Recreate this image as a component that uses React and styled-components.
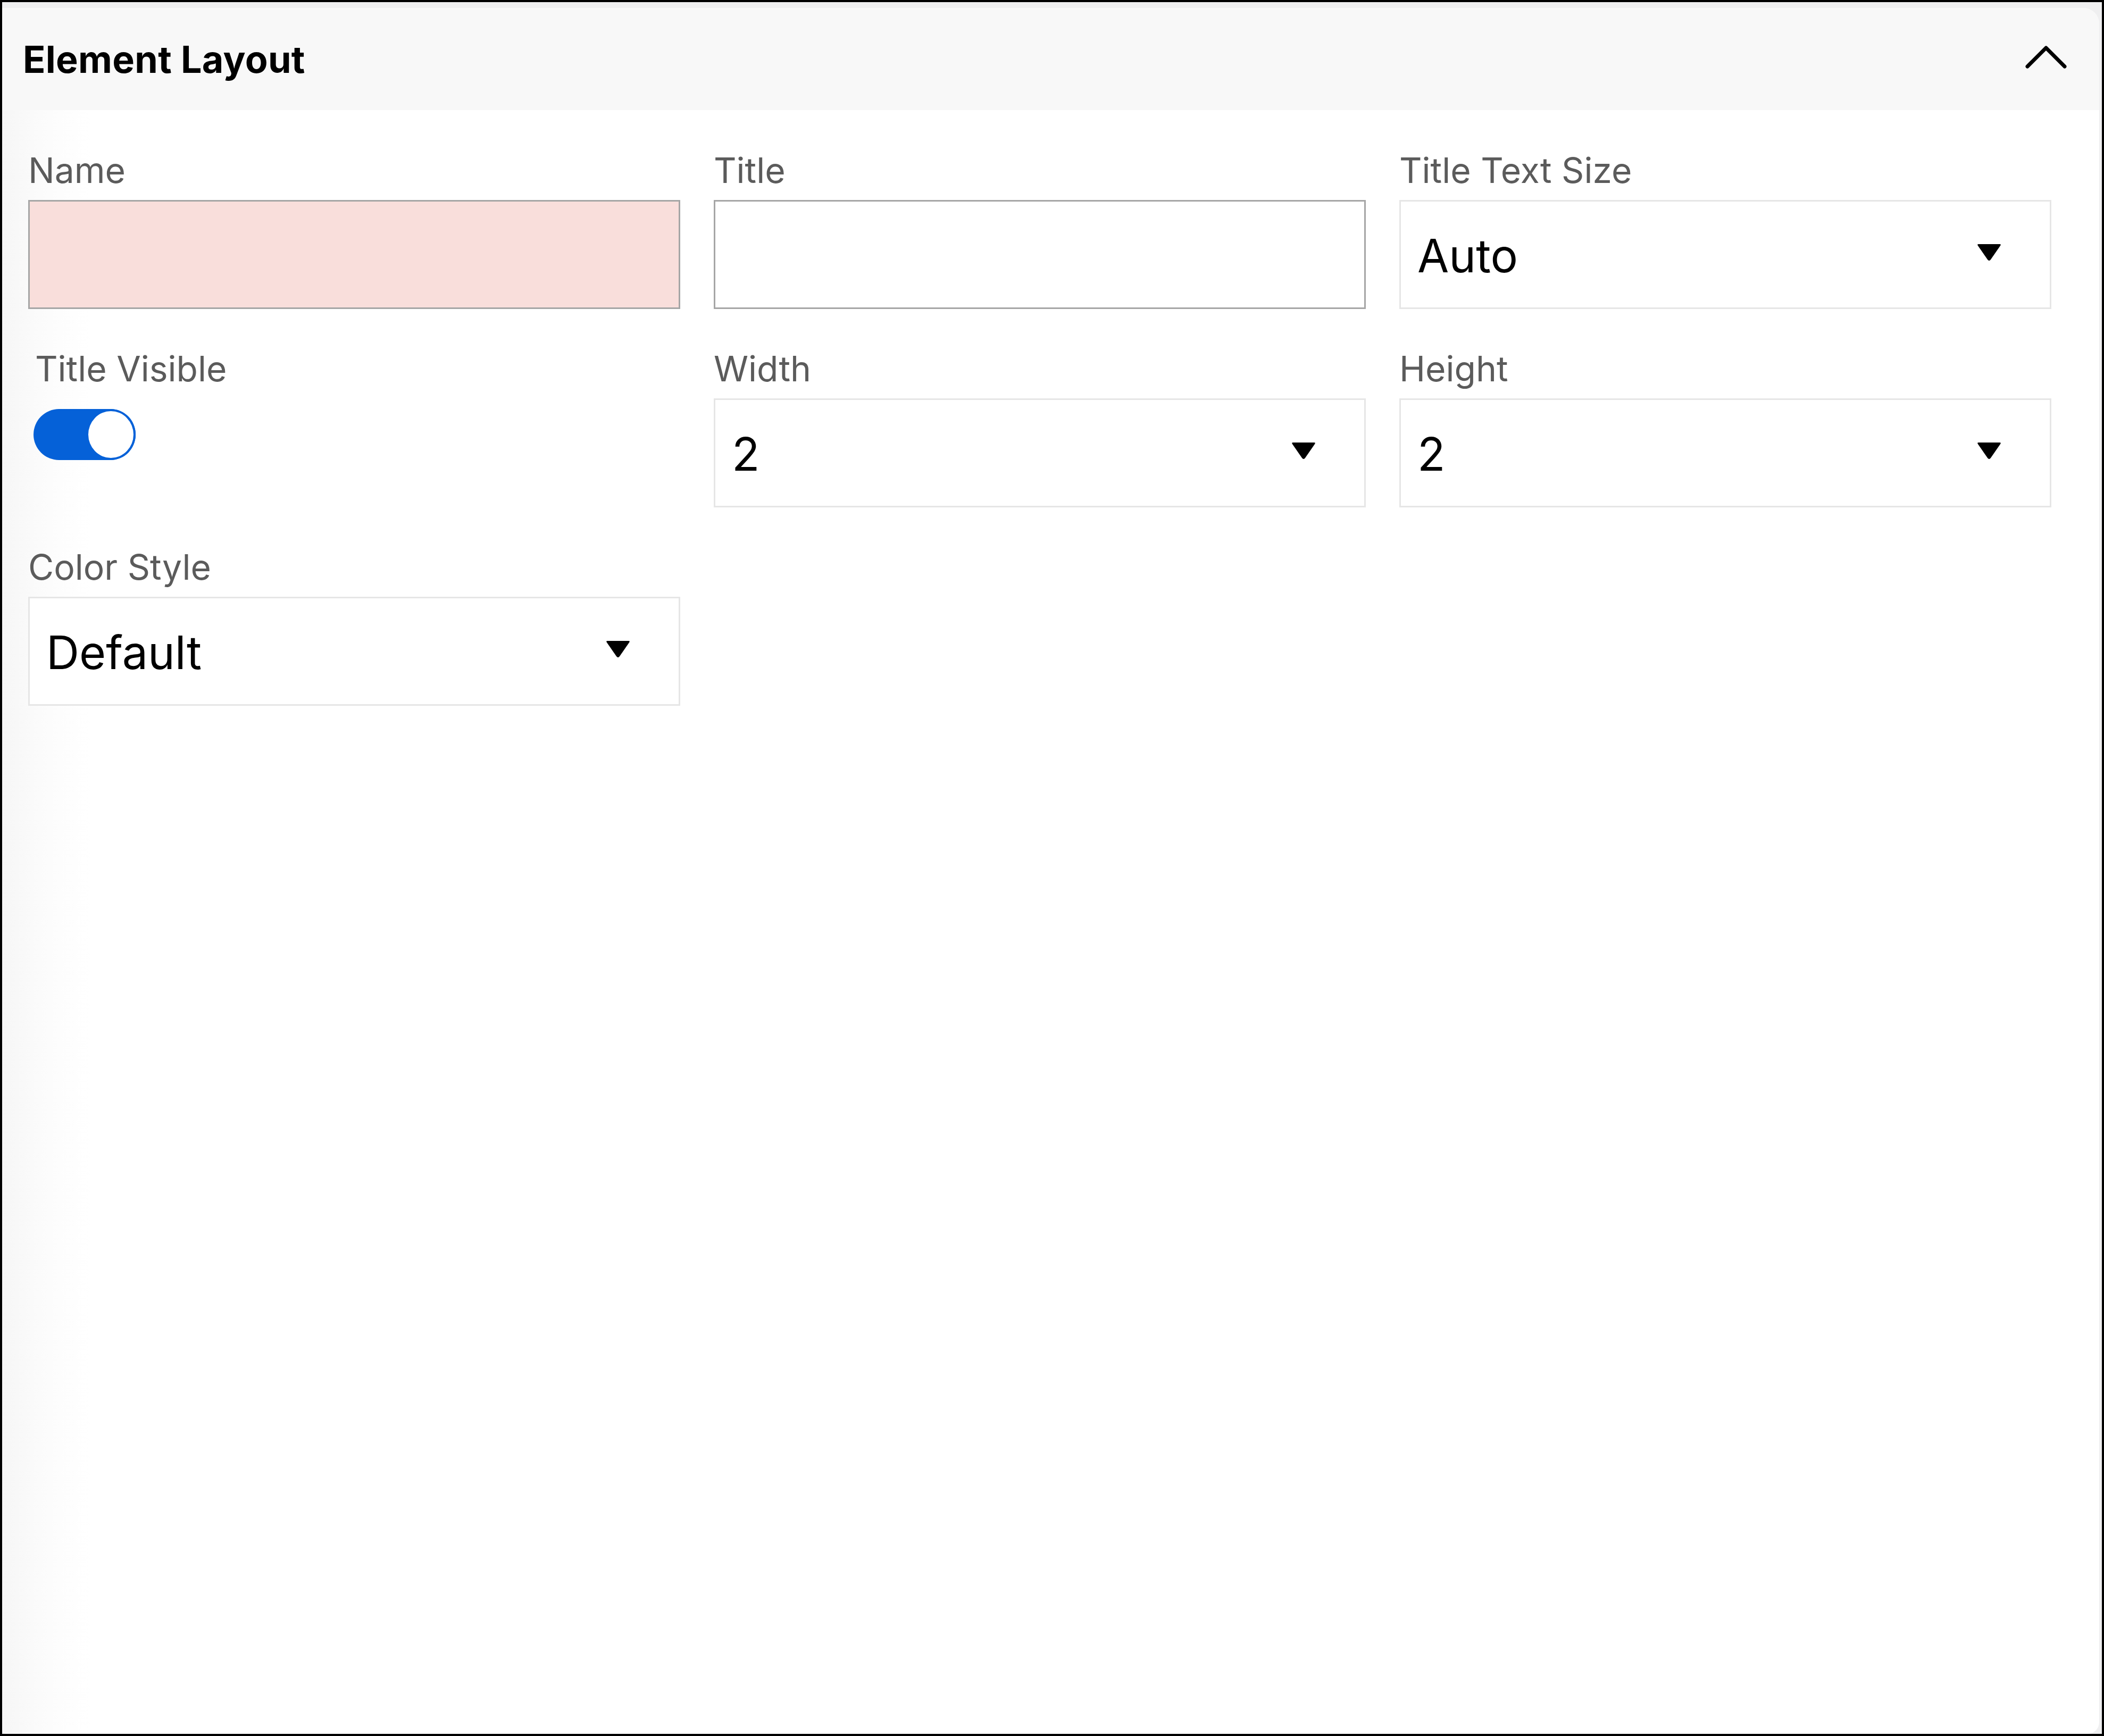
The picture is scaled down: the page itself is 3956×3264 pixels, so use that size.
import React from "react";
import styled, { createGlobalStyle } from "styled-components";

const Global = createGlobalStyle`
  html, body { margin: 0; padding: 0; background: #000; }
  body { font-family: Inter, "Noto Sans", "Liberation Sans", sans-serif; }
  * { box-sizing: border-box; }
`;

const Frame = styled.div`
  width: 3956px;
  height: 3264px;
  border: 4px solid #000;
  background: #efeff0;
  padding: 11px 5px 0 0;
  display: flex;
`;

const Panel = styled.section`
  flex: 1;
  display: flex;
  flex-direction: column;
  border-radius: 0 30px 22px 8px;
  overflow: hidden;
  background: linear-gradient(to right, #f6f6f6 0px, #fbfbfb 70px, #fdfdfd 110px, #ffffff 165px);
`;

const Header = styled.header`
  height: 192px;
  flex: none;
  display: flex;
  align-items: center;
  justify-content: space-between;
  padding: 0 60px 0 39px;
  background: #f8f8f8;
`;

const HeaderTitle = styled.h2`
  margin: 0;
  font-size: 70px;
  line-height: 85px;
  font-weight: 700;
  color: #000;
  letter-spacing: 0.3px;
`;

const Collapse = styled.button`
  border: 0;
  background: transparent;
  padding: 0;
  width: 80px;
  height: 60px;
  display: flex;
  align-items: center;
  justify-content: center;
  margin-top: -8px;
`;

const Body = styled.div`
  flex: 1;
  display: grid;
  grid-template-columns: repeat(3, 1226px);
  column-gap: 63px;
  row-gap: 72px;
  align-content: start;
  padding: 73px 0 0 49px;
`;

const Field = styled.div`
  display: flex;
  flex-direction: column;
  gap: ${(p) => p.$gap || 16}px;
`;

const Label = styled.label`
  display: block;
  font-size: 66px;
  line-height: 80px;
  color: #5b5b5b;
  padding-left: ${(p) => p.$indent || 0}px;
`;

const TextInput = styled.div`
  height: 205px;
  border: 3px solid #a6a6a6;
  background: ${(p) => (p.$invalid ? "#f9dedb" : "#ffffff")};
`;

const Select = styled.div`
  height: 205px;
  border: 3px solid #e6e6e6;
  background: #fff;
  display: flex;
  align-items: center;
  justify-content: space-between;
  padding: 0 90px 0 31px;
`;

const SelectValue = styled.span`
  font-size: 86px;
  line-height: 100px;
  color: #000;
  margin-top: 4px;
`;

const Caret = styled.svg`
  width: 48px;
  height: 36px;
  flex: none;
  margin-top: -10px;
`;

const Toggle = styled.div`
  width: 192px;
  height: 96px;
  border-radius: 48px;
  background: #0561d8;
  display: flex;
  align-items: center;
  justify-content: ${(p) => (p.$on ? "flex-end" : "flex-start")};
  margin-left: 10px;
`;

const Knob = styled.div`
  width: 93px;
  height: 96px;
  border-radius: 50%;
  background: #fff;
  border: 4px solid #0561d8;
`;

const DropCaret = () => (
  <Caret viewBox="0 0 48 36">
    <path d="M4 3 H44 Q47 3 45 6 L27 32 Q24 36 21 32 L3 6 Q1 3 4 3 Z" fill="#000" />
  </Caret>
);

const SelectField = ({ label, value }) => (
  <Field>
    <Label>{label}</Label>
    <Select>
      <SelectValue>{value}</SelectValue>
      <DropCaret />
    </Select>
  </Field>
);

export default function App() {
  return (
    <>
      <Global />
      <Frame>
        <Panel>
          <Header>
            <HeaderTitle>Element Layout</HeaderTitle>
            <Collapse aria-label="Collapse">
              <svg width="80" height="48" viewBox="0 0 80 48">
                <path d="M5 42 L40 7 L75 42" fill="none" stroke="#000" strokeWidth="7" strokeLinecap="round" strokeLinejoin="round" />
              </svg>
            </Collapse>
          </Header>
          <Body>
            <Field>
              <Label>Name</Label>
              <TextInput $invalid />
            </Field>
            <Field>
              <Label>Title</Label>
              <TextInput />
            </Field>
            <SelectField label="Title Text Size" value="Auto" />
            <Field $gap={36}>
              <Label $indent={13}>Title Visible</Label>
              <Toggle $on>
                <Knob />
              </Toggle>
            </Field>
            <SelectField label="Width" value="2" />
            <SelectField label="Height" value="2" />
            <SelectField label="Color Style" value="Default" />
          </Body>
        </Panel>
      </Frame>
    </>
  );
}
